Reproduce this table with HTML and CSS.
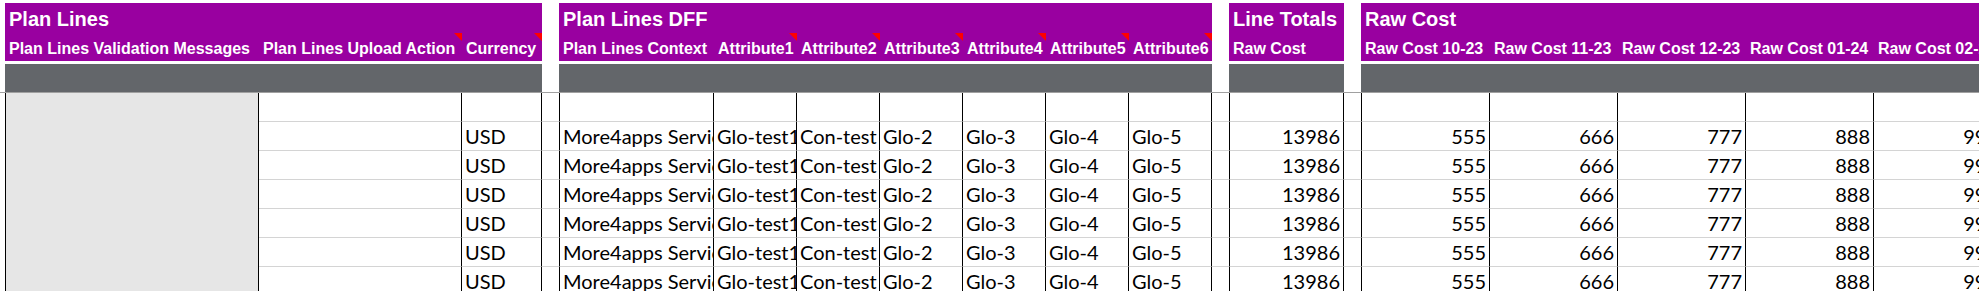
FILE: index.html
```html
<!DOCTYPE html>
<html lang="en">
  <head>
    <meta charset="UTF-8" />
    <meta name="viewport" content="width=device-width, initial-scale=1.0" />
    <title>Plan Lines</title>
    <link rel="stylesheet" href="styles.css">
  </head>
  <body>
    <div class="sheet">
      <!-- group titles -->
      <div class="row titles">
        <div class="band span3">Plan Lines</div>
        <div class="gap"></div>
        <div class="band span7">Plan Lines DFF</div>
        <div class="gap"></div>
        <div class="band">Line Totals</div>
        <div class="gap"></div>
        <div class="band span5">Raw Cost</div>
      </div>

      <!-- column headers, red corner = cell has a comment -->
      <div class="row heads">
        <div class="hd">Plan Lines Validation Messages</div>
        <div class="hd note">Plan Lines Upload Action</div>
        <div class="hd note">Currency</div>
        <div class="gap"></div>
        <div class="hd">Plan Lines Context</div>
        <div class="hd note">Attribute1</div>
        <div class="hd note">Attribute2</div>
        <div class="hd note">Attribute3</div>
        <div class="hd note">Attribute4</div>
        <div class="hd note">Attribute5</div>
        <div class="hd note">Attribute6</div>
        <div class="gap"></div>
        <div class="hd">Raw Cost</div>
        <div class="gap"></div>
        <div class="hd">Raw Cost 10-23</div>
        <div class="hd">Raw Cost 11-23</div>
        <div class="hd">Raw Cost 12-23</div>
        <div class="hd">Raw Cost 01-24</div>
        <div class="hd">Raw Cost 02-24</div>
      </div>

      <!-- grey filter bars -->
      <div class="row bars">
        <div class="bar span3"></div>
        <div class="gap"></div>
        <div class="bar span7"></div>
        <div class="gap"></div>
        <div class="bar"></div>
        <div class="gap"></div>
        <div class="bar span5"></div>
      </div>
      <div class="rule"></div>

      <!-- first line is empty -->
      <div class="row data">
        <div class="msg"></div>
        <div class="c"></div>
        <div class="c"></div>
        <div class="gap"></div>
        <div class="c l"></div>
        <div class="c"></div>
        <div class="c"></div>
        <div class="c"></div>
        <div class="c"></div>
        <div class="c"></div>
        <div class="c"></div>
        <div class="gap"></div>
        <div class="c l"></div>
        <div class="gap"></div>
        <div class="c l"></div>
        <div class="c"></div>
        <div class="c"></div>
        <div class="c"></div>
        <div class="c"></div>
      </div>

      <div class="row data">
        <div class="msg"></div>
        <div class="c"></div>
        <div class="c">USD</div>
        <div class="gap"></div>
        <div class="c l">More4apps Services</div>
        <div class="c">Glo-test1</div>
        <div class="c">Con-test</div>
        <div class="c">Glo-2</div>
        <div class="c">Glo-3</div>
        <div class="c">Glo-4</div>
        <div class="c">Glo-5</div>
        <div class="gap"></div>
        <div class="c l num">13986</div>
        <div class="gap"></div>
        <div class="c l num">555</div>
        <div class="c num">666</div>
        <div class="c num">777</div>
        <div class="c num">888</div>
        <div class="c num">999</div>
      </div>

      <div class="row data">
        <div class="msg"></div>
        <div class="c"></div>
        <div class="c">USD</div>
        <div class="gap"></div>
        <div class="c l">More4apps Services</div>
        <div class="c">Glo-test1</div>
        <div class="c">Con-test</div>
        <div class="c">Glo-2</div>
        <div class="c">Glo-3</div>
        <div class="c">Glo-4</div>
        <div class="c">Glo-5</div>
        <div class="gap"></div>
        <div class="c l num">13986</div>
        <div class="gap"></div>
        <div class="c l num">555</div>
        <div class="c num">666</div>
        <div class="c num">777</div>
        <div class="c num">888</div>
        <div class="c num">999</div>
      </div>

      <div class="row data">
        <div class="msg"></div>
        <div class="c"></div>
        <div class="c">USD</div>
        <div class="gap"></div>
        <div class="c l">More4apps Services</div>
        <div class="c">Glo-test1</div>
        <div class="c">Con-test</div>
        <div class="c">Glo-2</div>
        <div class="c">Glo-3</div>
        <div class="c">Glo-4</div>
        <div class="c">Glo-5</div>
        <div class="gap"></div>
        <div class="c l num">13986</div>
        <div class="gap"></div>
        <div class="c l num">555</div>
        <div class="c num">666</div>
        <div class="c num">777</div>
        <div class="c num">888</div>
        <div class="c num">999</div>
      </div>

      <div class="row data">
        <div class="msg"></div>
        <div class="c"></div>
        <div class="c">USD</div>
        <div class="gap"></div>
        <div class="c l">More4apps Services</div>
        <div class="c">Glo-test1</div>
        <div class="c">Con-test</div>
        <div class="c">Glo-2</div>
        <div class="c">Glo-3</div>
        <div class="c">Glo-4</div>
        <div class="c">Glo-5</div>
        <div class="gap"></div>
        <div class="c l num">13986</div>
        <div class="gap"></div>
        <div class="c l num">555</div>
        <div class="c num">666</div>
        <div class="c num">777</div>
        <div class="c num">888</div>
        <div class="c num">999</div>
      </div>

      <div class="row data">
        <div class="msg"></div>
        <div class="c"></div>
        <div class="c">USD</div>
        <div class="gap"></div>
        <div class="c l">More4apps Services</div>
        <div class="c">Glo-test1</div>
        <div class="c">Con-test</div>
        <div class="c">Glo-2</div>
        <div class="c">Glo-3</div>
        <div class="c">Glo-4</div>
        <div class="c">Glo-5</div>
        <div class="gap"></div>
        <div class="c l num">13986</div>
        <div class="gap"></div>
        <div class="c l num">555</div>
        <div class="c num">666</div>
        <div class="c num">777</div>
        <div class="c num">888</div>
        <div class="c num">999</div>
      </div>

      <div class="row data">
        <div class="msg"></div>
        <div class="c"></div>
        <div class="c">USD</div>
        <div class="gap"></div>
        <div class="c l">More4apps Services</div>
        <div class="c">Glo-test1</div>
        <div class="c">Con-test</div>
        <div class="c">Glo-2</div>
        <div class="c">Glo-3</div>
        <div class="c">Glo-4</div>
        <div class="c">Glo-5</div>
        <div class="gap"></div>
        <div class="c l num">13986</div>
        <div class="gap"></div>
        <div class="c l num">555</div>
        <div class="c num">666</div>
        <div class="c num">777</div>
        <div class="c num">888</div>
        <div class="c num">999</div>
      </div>
    </div>
  </body>
</html>
```

FILE: styles.css
```css
html,
body {
  margin: 0;
  background: #fff;
  overflow: hidden;
}
.sheet {
  --cols: 254px 203px 80px 17px 155px repeat(6, 83px) 17px 115px 17px 129px repeat(4, 128px);
  padding-top: 3px;
  width: max-content;
}
.row {
  display: grid;
  grid-template-columns: var(--cols);
  padding-left: 5px;
}
.span3 {
  grid-column: span 3;
}
.span5 {
  grid-column: span 5;
}
.span7 {
  grid-column: span 7;
}

/* purple header block */
.band,
.hd {
  background: #9900a0;
  color: #fff;
  font-family: "Liberation Sans", Arial, sans-serif;
  font-weight: bold;
  white-space: nowrap;
  overflow: hidden;
}
.band {
  height: 30px;
  box-sizing: border-box;
  padding: 6px 0 0 4px;
  font-size: 20px;
  line-height: 20px;
}
.hd {
  position: relative;
  height: 28px;
  box-sizing: border-box;
  padding: 8px 0 0 4px;
  font-size: 16px;
  line-height: 16px;
}
.hd.note::after {
  content: "";
  position: absolute;
  top: 0;
  right: 0;
  width: 0;
  height: 0;
  border-top: 8px solid #ff0000;
  border-left: 8px solid transparent;
}
.bars {
  margin-top: 3px;
}
.bar {
  height: 28px;
  background: #63666a;
}
.rule {
  height: 1px;
  background: #a0a0a0;
}

/* body cells */
.data > div {
  height: 29px;
  box-sizing: border-box;
}
.c {
  border-right: 1px solid #000;
  border-bottom: 1px solid #d4d4d4;
  padding: 0 3px;
  font-family: Lato, "Open Sans", sans-serif;
  font-size: 20px;
  line-height: 28px;
  color: #000;
  white-space: nowrap;
  overflow: hidden;
}
.c.l {
  border-left: 1px solid #000;
}
.c.num {
  text-align: right;
}
.msg {
  background: #e6e6e6;
  border-left: 1px solid #000;
  border-right: 1px solid #000;
}
.gap {
  border-bottom: 1px solid #d4d4d4;
}
.titles .gap,
.heads .gap,
.bars .gap {
  border: 0;
}
```
